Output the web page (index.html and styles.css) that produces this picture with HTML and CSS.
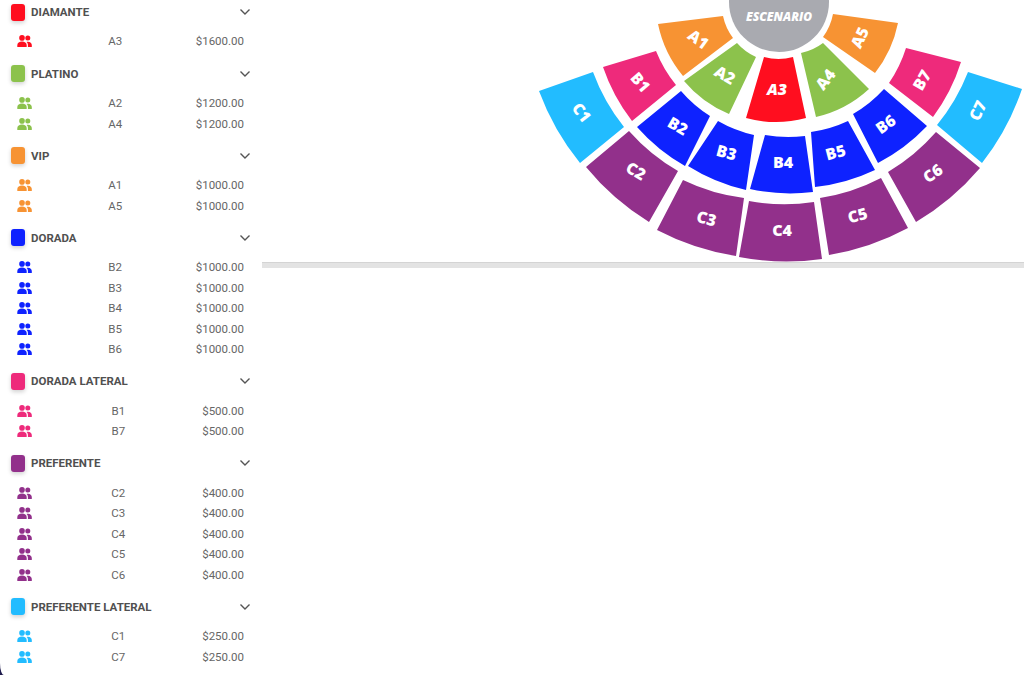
FILE: index.html
```html
<!DOCTYPE html>
<html lang="en">
<head>
  <meta charset="UTF-8">
  <title>Zonas</title>
  <link rel="stylesheet" href="styles.css">
</head>
<body>
  <svg class="defs" width="0" height="0">
    <symbol id="people" viewBox="0 0 15 12">
      <circle cx="5" cy="2.9" r="2.8"/>
      <circle cx="10.8" cy="3.1" r="2.5"/>
      <path d="M0.3 12V10C0.3 8 2.4 6.6 5 6.6S9.7 8 9.7 10V12Z"/>
      <path d="M10.9 12V10C10.9 8.7 10.4 7.7 9.5 7 10 6.8 10.5 6.7 11 6.7 13.2 6.7 14.8 8.1 14.8 10V12Z"/>
    </symbol>
    <symbol id="chevron" viewBox="0 0 12 8">
      <polyline points="1.5,1.5 6,6 10.5,1.5"/>
    </symbol>
  </svg>

  <div class="page">
    <!-- Price list -->
    <aside class="sidebar">
      <div class="sidebar-inner">
        <section class="group diamante">
          <header class="group-head"><span class="swatch"></span><h3>DIAMANTE</h3><svg class="chevron"><use href="#chevron"/></svg></header>
          <div class="row"><svg class="people"><use href="#people"/></svg><span class="code">A3</span><span class="price">$1600.00</span></div>
        </section>
        <section class="group platino">
          <header class="group-head"><span class="swatch"></span><h3>PLATINO</h3><svg class="chevron"><use href="#chevron"/></svg></header>
          <div class="row"><svg class="people"><use href="#people"/></svg><span class="code">A2</span><span class="price">$1200.00</span></div>
          <div class="row"><svg class="people"><use href="#people"/></svg><span class="code">A4</span><span class="price">$1200.00</span></div>
        </section>
        <section class="group vip">
          <header class="group-head"><span class="swatch"></span><h3>VIP</h3><svg class="chevron"><use href="#chevron"/></svg></header>
          <div class="row"><svg class="people"><use href="#people"/></svg><span class="code">A1</span><span class="price">$1000.00</span></div>
          <div class="row"><svg class="people"><use href="#people"/></svg><span class="code">A5</span><span class="price">$1000.00</span></div>
        </section>
        <section class="group dorada">
          <header class="group-head"><span class="swatch"></span><h3>DORADA</h3><svg class="chevron"><use href="#chevron"/></svg></header>
          <div class="row"><svg class="people"><use href="#people"/></svg><span class="code">B2</span><span class="price">$1000.00</span></div>
          <div class="row"><svg class="people"><use href="#people"/></svg><span class="code">B3</span><span class="price">$1000.00</span></div>
          <div class="row"><svg class="people"><use href="#people"/></svg><span class="code">B4</span><span class="price">$1000.00</span></div>
          <div class="row"><svg class="people"><use href="#people"/></svg><span class="code">B5</span><span class="price">$1000.00</span></div>
          <div class="row"><svg class="people"><use href="#people"/></svg><span class="code">B6</span><span class="price">$1000.00</span></div>
        </section>
        <section class="group lateral">
          <header class="group-head"><span class="swatch"></span><h3>DORADA LATERAL</h3><svg class="chevron"><use href="#chevron"/></svg></header>
          <div class="row"><svg class="people"><use href="#people"/></svg><span class="code">B1</span><span class="price">$500.00</span></div>
          <div class="row"><svg class="people"><use href="#people"/></svg><span class="code">B7</span><span class="price">$500.00</span></div>
        </section>
        <section class="group preferente">
          <header class="group-head"><span class="swatch"></span><h3>PREFERENTE</h3><svg class="chevron"><use href="#chevron"/></svg></header>
          <div class="row"><svg class="people"><use href="#people"/></svg><span class="code">C2</span><span class="price">$400.00</span></div>
          <div class="row"><svg class="people"><use href="#people"/></svg><span class="code">C3</span><span class="price">$400.00</span></div>
          <div class="row"><svg class="people"><use href="#people"/></svg><span class="code">C4</span><span class="price">$400.00</span></div>
          <div class="row"><svg class="people"><use href="#people"/></svg><span class="code">C5</span><span class="price">$400.00</span></div>
          <div class="row"><svg class="people"><use href="#people"/></svg><span class="code">C6</span><span class="price">$400.00</span></div>
        </section>
        <section class="group pref-lateral">
          <header class="group-head"><span class="swatch"></span><h3>PREFERENTE LATERAL</h3><svg class="chevron"><use href="#chevron"/></svg></header>
          <div class="row"><svg class="people"><use href="#people"/></svg><span class="code">C1</span><span class="price">$250.00</span></div>
          <div class="row"><svg class="people"><use href="#people"/></svg><span class="code">C7</span><span class="price">$250.00</span></div>
        </section>
      </div>
    </aside>

    <!-- Seating map -->
    <main class="main">
      <svg class="map" viewBox="262 0 762 262">
        <circle class="stage" cx="779" cy="2" r="50"/>

        <path class="vip-fill" d="M723 16A56 56 0 0 0 733 38L683 76A119 119 0 0 1 658 24Z"/>
        <path class="platino-fill" d="M737 43A55 55 0 0 0 756 57L729 114A117 117 0 0 1 684 81Z"/>
        <path class="diamante-fill" d="M764 57A52 52 0 0 0 793 57L806 118A115 115 0 0 1 746 118Z"/>
        <path class="platino-fill" d="M801 53A55 55 0 0 0 823 43L869 89A117 117 0 0 1 816 117Z"/>
        <path class="vip-fill" d="M823 37A56 56 0 0 0 833 14L898 23A119 119 0 0 1 875 73Z"/>

        <path class="lateral-fill" d="M656 51A130 130 0 0 0 676 85L632 121A186 186 0 0 1 603 67Z"/>
        <path class="dorada-fill" d="M681 91A129 129 0 0 0 710 116L685 166A186 186 0 0 1 637 127Z"/>
        <path class="dorada-fill" d="M718 121A129 129 0 0 0 754 135L746 190A186 186 0 0 1 688 166Z"/>
        <path class="dorada-fill" d="M765 135A129 129 0 0 0 805 136L813 192A186 186 0 0 1 750 189Z"/>
        <path class="dorada-fill" d="M811 132A129 129 0 0 0 848 121L875 170A186 186 0 0 1 815 187Z"/>
        <path class="dorada-fill" d="M853 114A129 129 0 0 0 884 89L927 126A186 186 0 0 1 878 163Z"/>
        <path class="lateral-fill" d="M889 83A130 130 0 0 0 906 48L961 62A186 186 0 0 1 933 117Z"/>

        <path class="pref-lateral-fill" d="M593 72A196 196 0 0 0 624 127L580 163A254 254 0 0 1 539 91Z"/>
        <path class="preferente-fill" d="M629 131A196 196 0 0 0 678 171L649 222A254 254 0 0 1 586 167Z"/>
        <path class="preferente-fill" d="M683 180A196 196 0 0 0 744 198L736 256A254 254 0 0 1 657 230Z"/>
        <path class="preferente-fill" d="M749 201A196 196 0 0 0 814 202L822 259A254 254 0 0 1 739 257Z"/>
        <path class="preferente-fill" d="M820 198A196 196 0 0 0 881 178L908 228A254 254 0 0 1 829 255Z"/>
        <path class="preferente-fill" d="M888 172A196 196 0 0 0 936 132L980 168A254 254 0 0 1 916 222Z"/>
        <path class="pref-lateral-fill" d="M937 125A196 196 0 0 0 968 72L1022 89A254 254 0 0 1 982 163Z"/>

        <text class="stage-label" x="779" y="21">ESCENARIO</text>
        <text class="seat-label" transform="translate(695 44) rotate(36)">A1</text>
        <text class="seat-label" transform="translate(722 80) rotate(30)">A2</text>
        <text class="seat-label italic" transform="translate(777 95)">A3</text>
        <text class="seat-label" transform="translate(830 83) rotate(-52)">A4</text>
        <text class="seat-label" transform="translate(865 40) rotate(-65)">A5</text>
        <text class="seat-label" transform="translate(636 86) rotate(50)">B1</text>
        <text class="seat-label" transform="translate(675 131) rotate(30)">B2</text>
        <text class="seat-label" transform="translate(725 158) rotate(15)">B3</text>
        <text class="seat-label" transform="translate(783 168)">B4</text>
        <text class="seat-label" transform="translate(837 158) rotate(-15)">B5</text>
        <text class="seat-label" transform="translate(889 129) rotate(-35)">B6</text>
        <text class="seat-label" transform="translate(927 83) rotate(-60)">B7</text>
        <text class="seat-label" transform="translate(577 116) rotate(52)">C1</text>
        <text class="seat-label" transform="translate(633 176) rotate(30)">C2</text>
        <text class="seat-label" transform="translate(705 224) rotate(15)">C3</text>
        <text class="seat-label" transform="translate(782 236)">C4</text>
        <text class="seat-label" transform="translate(859 221) rotate(-15)">C5</text>
        <text class="seat-label" transform="translate(936 178) rotate(-35)">C6</text>
        <text class="seat-label" transform="translate(983 113) rotate(-65)">C7</text>
      </svg>
      <div class="divider"></div>
    </main>
  </div>
</body>
</html>
```

FILE: styles.css
```css
/* Zone colours */
.diamante { --zone: #ff0e1f; }
.platino { --zone: #8cc24c; }
.vip { --zone: #f79333; }
.dorada { --zone: #0e22ff; }
.lateral { --zone: #ee2a7b; }
.preferente { --zone: #92308b; }
.pref-lateral { --zone: #22bcff; }

.diamante-fill { fill: #ff0e1f; }
.platino-fill { fill: #8cc24c; }
.vip-fill { fill: #f79333; }
.dorada-fill { fill: #0e22ff; }
.lateral-fill { fill: #ee2a7b; }
.preferente-fill { fill: #92308b; }
.pref-lateral-fill { fill: #22bcff; }

html, body {
  margin: 0;
  padding: 0;
  height: 100%;
  overflow: hidden;
  background: #ffffff;
  font-family: Roboto, Arial, sans-serif;
}

.defs {
  position: absolute;
}

.page {
  display: flex;
  height: 675px;
}

/* Sidebar */
.sidebar {
  width: 262px;
  flex-shrink: 0;
  background: #1f1b4d;
}

.sidebar-inner {
  height: 100%;
  box-sizing: border-box;
  padding-right: 18px;
  background: #ffffff;
  border-bottom-left-radius: 4px 12px;
}

.group {
  padding-bottom: 10.05px;
}

.group-head {
  display: flex;
  align-items: center;
  height: 24px;
  padding-left: 11px;
  margin-bottom: 7.2px;
}

.swatch {
  width: 14px;
  height: 17px;
  margin-right: 6px;
  border-radius: 3px;
  background: var(--zone);
  box-shadow: 0 2px 4px rgba(0, 0, 0, 0.18);
}

.group-head h3 {
  flex: 1;
  margin: 0;
  font-size: 11.5px;
  font-weight: 700;
  color: #505050;
}

.chevron {
  width: 12px;
  height: 8px;
  margin-right: -7px;
  fill: none;
  stroke: #555555;
  stroke-width: 1.4;
}

.row {
  display: flex;
  align-items: center;
  height: 20.45px;
  padding-left: 17px;
  font-size: 11.5px;
  color: #666666;
}

.people {
  width: 15px;
  height: 12px;
  margin-right: 2.5px;
  fill: var(--zone);
}

.code {
  flex: 1;
  text-align: center;
}

/* Seating map */
.main {
  flex: 1;
  min-width: 0;
}

.map {
  display: block;
  width: 762px;
  height: 262px;
}

.stage {
  fill: #a9aab0;
}

.stage-label {
  fill: #ffffff;
  font-family: "Open Sans", sans-serif;
  font-size: 12px;
  font-weight: 800;
  font-style: italic;
  text-anchor: middle;
}

.seat-label {
  fill: #ffffff;
  font-family: "Open Sans", sans-serif;
  font-size: 16px;
  font-weight: 800;
  text-anchor: middle;
}

.seat-label.italic {
  font-style: italic;
}

.divider {
  height: 5px;
  background: #e3e3e3;
  border-top: 1px solid #d4d4d4;
}
```
